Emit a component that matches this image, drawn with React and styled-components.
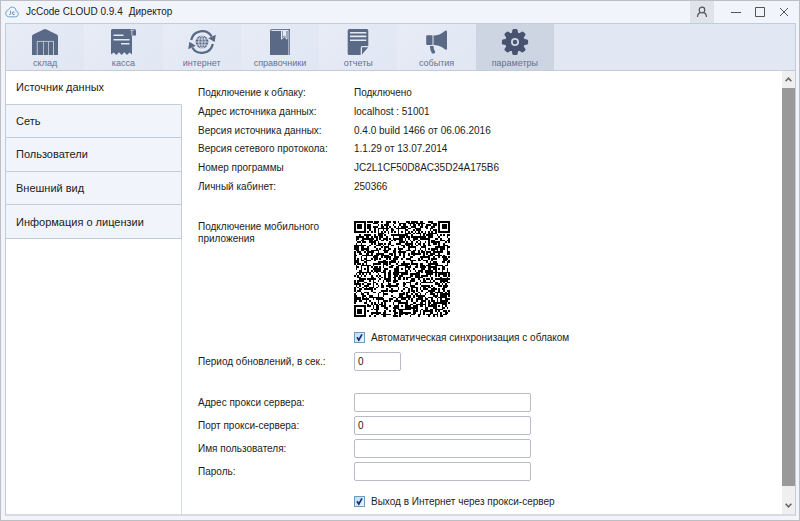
import React, { useState } from "react";
import styled, { createGlobalStyle } from "styled-components";

const GlobalStyle = createGlobalStyle`
  *, *::before, *::after { box-sizing: border-box; }
  body { margin: 0; }
  body, button, input { font-family: "Liberation Sans", Arial, sans-serif; }
`;

const slate = "#5a6986";
const line = "#c3cdd9";

const Window = styled.div`
  height: 100vh;
  display: flex;
  flex-direction: column;
  padding: 0 3px 4px 4px;
  border: 1px solid #bcbec2;
  background: #f1f4fa;
  color: #1c1c1c;
`;

const TitleBar = styled.header`
  flex: none;
  display: flex;
  align-items: center;
  height: 22px;
`;

const Title = styled.h1`
  display: flex;
  gap: 6px;
  margin: 0 auto 0 7px;
  font-size: 10px;
  font-weight: 400;
  line-height: 14px;
  color: #222;
`;

const WindowButton = styled.button`
  display: grid;
  place-items: center;
  width: 24px;
  height: 22px;
  padding: 0;
  border: 0;
  background: ${(p) => (p.$filled ? "#dfe3ea" : "transparent")};
  margin-right: ${(p) => (p.$filled ? "10px" : "0")};
  color: #555;
`;

const Frame = styled.div`
  flex: 1;
  min-height: 0;
  display: flex;
  flex-direction: column;
  border: 1px solid ${line};
  border-bottom-width: 2px;
  border-bottom-color: #d5dbe6;
  background: #fff;
`;

const Toolbar = styled.nav`
  flex: none;
  height: 47px;
  border-bottom: 1px solid ${line};
  background: #e1e8f4;
`;

const TabList = styled.div`
  display: grid;
  grid-template-columns: repeat(7, 1fr);
  max-width: 548px;
  height: 100%;
`;

const Tab = styled.button`
  display: flex;
  flex-direction: column;
  align-items: center;
  gap: 2px;
  padding: 4px 0 0;
  border: 0;
  background: ${(p) =>
    p.$active ? "#cdd4e2" : "linear-gradient(135deg, #e7ecf6, #e0e7f3)"};
  color: ${(p) => (p.$active ? "#475370" : slate)};
  font-size: 9px;
  line-height: 11px;
`;

const TabLabel = styled.span`
  color: #66738d;
`;

const Body = styled.div`
  flex: 1;
  min-height: 0;
  display: flex;
`;

const Sidebar = styled.nav`
  flex: none;
  width: 176px;
  border-right: 1px solid #d5dde5;
`;

const SideList = styled.div`
  display: grid;
  grid-template-rows: repeat(5, 1fr);
  height: 168px;
  margin-right: -1px;
`;

const SideItem = styled.button`
  padding: 0 10px;
  border: 0;
  border-bottom: 1px solid ${line};
  border-right: 1px solid ${(p) => (p.$active ? "#fff" : line)};
  background: ${(p) => (p.$active ? "#fff" : "#f1f4fa")};
  color: #222;
  font-size: 11px;
  line-height: 16px;
  text-align: left;
`;

const Content = styled.main`
  flex: 1;
  min-width: 0;
  padding: 13px 16px 0;
  overflow: hidden;
  font-size: 10px;
  line-height: 12px;
`;

const Facts = styled.dl`
  display: grid;
  grid-template-columns: 156px 1fr;
  grid-auto-rows: 1fr;
  align-items: center;
  height: 112px;
  margin: 0 0 25px;
`;

const FactName = styled.dt``;
const FactValue = styled.dd`
  margin: 0;
`;

const Row = styled.div`
  display: grid;
  grid-template-columns: 156px 1fr;
  align-items: ${(p) => (p.$top ? "start" : "center")};
`;

const Label = styled.label`
  max-width: 130px;
`;

const Fields = styled.div`
  display: grid;
  gap: 4px;
  margin: 22px 0 14px;
`;

const TextBox = styled.input`
  width: ${(p) => (p.$short ? "47px" : "177px")};
  height: 19px;
  padding: 0 3px;
  border: 1px solid #b9bcc4;
  border-radius: 2px;
  background: #fff;
  color: #222;
  font-size: 10px;
`;

const CheckLine = styled.label`
  display: flex;
  align-items: center;
  gap: 6px;
  height: 13px;
  margin-left: 156px;
`;

const CheckCell = styled.span`
  display: grid;
  width: 11px;
  height: 11px;
  & > * {
    grid-area: 1 / 1;
  }
`;

const CheckInput = styled.input`
  appearance: none;
  width: 11px;
  height: 11px;
  margin: 0;
  border: 1px solid #6d9cc0;
  background: linear-gradient(135deg, #b8dcf2, #eef8fd);
  & + svg {
    visibility: hidden;
    pointer-events: none;
  }
  &:checked + svg {
    visibility: visible;
  }
`;

const SyncGroup = styled.div`
  display: grid;
  gap: 8px;
  margin-top: 14px;
`;

const Scrollbar = styled.div`
  flex: none;
  display: flex;
  flex-direction: column;
  width: 13px;
  background: #efefef;
`;

const ScrollButton = styled.button`
  display: grid;
  place-items: center;
  width: 13px;
  height: ${(p) => (p.$down ? "18px" : "17px")};
  padding: 0;
  border: 0;
  background: transparent;
  color: #666;
`;

const ScrollThumb = styled.div`
  flex: 1;
  margin-bottom: 10px;
  background: #999;
`;

const Icon = ({ children, width = 28, height = 28 }) => (
  <svg width={width} height={height} viewBox={`0 0 ${width} ${height}`} fill="currentColor" aria-hidden="true">
    {children}
  </svg>
);

const WarehouseIcon = () => (
  <Icon>
    <path d="M1 8.5Q1 7.2 2.2 6.6L12.5 1.4Q14 .7 15.5 1.4L25.8 6.6Q27 7.2 27 8.5V27H23V13H6V27H1Z" />
    <path d="M6.2 13.2H22.5V27H6.2Z" />
    <path d="M6.2 27V13.4H22.5V27M12.5 13.4V27M17.5 13.4V27" fill="none" stroke="#c7d0df" strokeWidth=".8" />
  </Icon>
);

const ReceiptIcon = () => (
  <Icon>
    <path d="M2 2.5Q2 1 3.5 1H25Q27 1 27 3V7.5H23V26.5L20.5 24.5 18 27 15.3 24.3 12.7 27 10 24.3 7.4 27 4.7 24.5 2 26.5Z" />
    <path d="M22.9 7.5V3.4Q22.7 2.3 21.7 2.2H25" fill="none" stroke="#e4eaf5" strokeWidth=".8" />
    <path d="M4.5 7.2H14.5M4.5 11.7H20.5M12 15.7H20.5" fill="none" stroke="#e4eaf5" strokeWidth="1.4" />
  </Icon>
);

const InternetIcon = () => (
  <Icon>
    <g fill="none" stroke="currentColor" strokeWidth="2.3">
      <path d="M3.2 12A11.2 11.2 0 0 1 23.7 8.5" />
      <path d="M24.8 16A11.2 11.2 0 0 1 4.3 19.5" />
    </g>
    <path d="M27.8 6.8 26.7 14 20.2 10.2ZM.2 21.2 1.4 13.8 7.8 17.8Z" />
    <circle cx="14" cy="14" r="6.4" />
    <g fill="none" stroke="#e4eaf5" strokeWidth=".8">
      <path d="M8 11H20M7.5 14H20.5M8 17H20M14 7.5V20.5" />
      <ellipse cx="14" cy="14" rx="3.2" ry="6.4" />
    </g>
  </Icon>
);

const BookIcon = () => (
  <Icon>
    <path d="M4 2.8Q4 1 5.8 1H24V27H4Z" />
    <path d="M5.3 2.4H22.5" stroke="#e4eaf5" strokeWidth="1.1" />
    <path d="M15.5 2.4V11.2L18.2 8.6 21 11.2V2.4" fill="none" stroke="#e4eaf5" strokeWidth="1" />
    <path d="M16.6 2.9H20V9L18.2 7.4 16.6 9Z" fill="#e4eaf5" />
    <path d="M22.8 2.5V27" stroke="#c1cadb" strokeWidth="1" />
  </Icon>
);

const ReportIcon = () => (
  <Icon>
    <path d="M3.7 2.5Q3.7 1 5.2 1H22.8Q24.3 1 24.3 2.5V18H18.5Q16.7 18 16.7 20V27H5.2Q3.7 27 3.7 25.5Z" />
    <path d="M18 19.2H24.2L18 26.6Z" />
    <path d="M6 4.7H22.3M6 8.4H22.3M6 12.2H22.3" stroke="#e4eaf5" strokeWidth="1.6" />
  </Icon>
);

const MegaphoneIcon = () => (
  <Icon>
    <path d="M4.3 7.3H9.5V17H4.3Q3.2 17 3.2 15.9V8.4Q3.2 7.3 4.3 7.3Z" />
    <path d="M10.5 7.5Q17 7.2 20.8 3.7Q24 1.2 24 4V20.5Q24 23 20.8 20.5Q17 17.3 10.5 17Z" />
    <path d="M6.8 18H10.5Q10.3 21 12.2 23.8Q12.4 25.5 10.8 25.5H9Q7.1 22.5 6.8 18Z" />
  </Icon>
);

const GearIcon = () => (
  <Icon>
    <circle cx="14" cy="14" r="9.8" />
    {[0, 45, 90, 135, 180, 225, 270, 315].map((a) => (
      <path key={a} transform={`rotate(${a} 14 14)`} d="M10.6 6.5 11.4 2Q11.7 .9 12.8.9H15.2Q16.3.9 16.6 2L17.4 6.5Z" />
    ))}
    <circle cx="14" cy="14" r="4" fill="#cdd4e2" />
    <circle cx="14" cy="14" r="2.2" />
  </Icon>
);

const CloudLogo = () => (
  <svg width="14" height="12" viewBox="0 0 14 12" fill="none" stroke="#6fa6cc" aria-hidden="true">
    <path d="M3.4 10.8H10.8Q13.4 10.5 13.3 7.9 13.2 5.8 11.2 5.1 11.1 1.2 7.4 1 4.6.9 3.6 3.7 1 4 .7 7.2.6 10.3 3.4 10.8Z" />
    <path d="M5.6 4.8V7.8Q5.4 8.8 4.2 8.4M9.6 6.1Q7.4 5.3 7.4 7.2T9.6 8.4" stroke="#5585ad" strokeWidth=".9" />
  </svg>
);

/* Code symbol of 57 x 57 modules: finder, timing and alignment marks, then data. */
const N = 57;

function moduleAt(x, y, noise) {
  for (const [fx, fy] of [[3, 3], [N - 4, 3], [3, N - 4]]) {
    const d = Math.max(Math.abs(x - fx), Math.abs(y - fy));
    if (d <= 4) return d !== 4 && d !== 2;
  }
  for (const ay of [6, 28, 50]) {
    for (const ax of [6, 28, 50]) {
      const nearFinder = (ax === 6 && ay !== 28) || (ay === 6 && ax === 50);
      const d = Math.max(Math.abs(x - ax), Math.abs(y - ay));
      if (!nearFinder && d <= 2) return d !== 1;
    }
  }
  if (x === 6) return y % 2 === 0;
  if (y === 6) return x % 2 === 0;
  return noise > 0.48;
}

function buildCode() {
  let seed = 250366;
  let d = "";
  for (let y = 0; y < N; y++) {
    for (let x = 0; x < N; x++) {
      seed ^= seed << 13;
      seed ^= seed >>> 17;
      seed ^= seed << 5;
      if (moduleAt(x, y, (seed >>> 0) / 4294967296)) d += `M${x} ${y}h1v1h-1z`;
    }
  }
  return d;
}

const codePath = buildCode();

const QrCode = () => (
  <svg width="96" height="96" viewBox={`0 0 ${N} ${N}`} shapeRendering="crispEdges" role="img" aria-label="QR">
    <path d={codePath} fill="#000" />
  </svg>
);

const tabs = [
  ["склад", WarehouseIcon],
  ["касса", ReceiptIcon],
  ["интернет", InternetIcon],
  ["справочники", BookIcon],
  ["отчеты", ReportIcon],
  ["события", MegaphoneIcon],
  ["параметры", GearIcon],
];

const sections = ["Источник данных", "Сеть", "Пользователи", "Внешний вид", "Информация о лицензии"];

const facts = [
  ["Подключение к облаку:", "Подключено"],
  ["Адрес источника данных:", "localhost : 51001"],
  ["Версия источника данных:", "0.4.0 build 1466 от 06.06.2016"],
  ["Версия сетевого протокола:", "1.1.29 от 13.07.2014"],
  ["Номер программы", "JC2L1CF50D8AC35D24A175B6"],
  ["Личный кабинет:", "250366"],
];

const proxyFields = [
  ["host", "Адрес прокси сервера:", "", "text"],
  ["port", "Порт прокси-сервера:", "0", "text"],
  ["user", "Имя пользователя:", "", "text"],
  ["password", "Пароль:", "", "password"],
];

const Check = ({ children }) => (
  <CheckLine>
    <CheckCell>
      <CheckInput type="checkbox" defaultChecked />
      <svg width="11" height="11" viewBox="0 0 11 11" fill="none" stroke="#1d2f7c" strokeWidth="1.7" aria-hidden="true">
        <path d="M3 5.2 4.8 8 8 2.4" />
      </svg>
    </CheckCell>
    {children}
  </CheckLine>
);

export default function App() {
  const [tab, setTab] = useState("параметры");
  const [section, setSection] = useState(sections[0]);

  return (
    <Window>
      <GlobalStyle />
      <TitleBar>
        <CloudLogo />
        <Title>
          <span>JcCode CLOUD 0.9.4</span>
          <span>Директор</span>
        </Title>
        <WindowButton $filled aria-label="Профиль">
          <svg width="12" height="12" viewBox="0 0 12 12" fill="none" stroke="currentColor" strokeWidth="1.2">
            <circle cx="6" cy="4" r="2.8" />
            <path d="M1.5 11Q1.7 7.2 4.5 6.6M10.5 11Q10.3 7.2 7.5 6.6" />
          </svg>
        </WindowButton>
        <WindowButton aria-label="Свернуть">
          <svg width="10" height="10" viewBox="0 0 10 10" stroke="currentColor">
            <path d="M0 5.5H10" />
          </svg>
        </WindowButton>
        <WindowButton aria-label="Развернуть">
          <svg width="10" height="10" viewBox="0 0 10 10" fill="none" stroke="currentColor">
            <path d="M.5.5H9.5V9.5H.5Z" />
          </svg>
        </WindowButton>
        <WindowButton aria-label="Закрыть">
          <svg width="10" height="10" viewBox="0 0 10 10" stroke="currentColor">
            <path d="M1 1 9 9M9 1 1 9" />
          </svg>
        </WindowButton>
      </TitleBar>
      <Frame>
        <Toolbar>
          <TabList>
            {tabs.map(([name, TabIcon]) => (
              <Tab key={name} $active={tab === name} onClick={() => setTab(name)}>
                <TabIcon />
                <TabLabel>{name}</TabLabel>
              </Tab>
            ))}
          </TabList>
        </Toolbar>
        <Body>
          <Sidebar>
            <SideList>
              {sections.map((name) => (
                <SideItem key={name} $active={section === name} onClick={() => setSection(name)}>
                  {name}
                </SideItem>
              ))}
            </SideList>
          </Sidebar>
          <Content>
            <Facts>
              {facts.map(([name, value]) => (
                <React.Fragment key={name}>
                  <FactName>{name}</FactName>
                  <FactValue>{value}</FactValue>
                </React.Fragment>
              ))}
            </Facts>
            <Row $top>
              <Label as="div">Подключение мобильного приложения</Label>
              <QrCode />
            </Row>
            <SyncGroup>
              <Check>Автоматическая синхронизация с облаком</Check>
              <Row>
                <Label htmlFor="period">Период обновлений, в сек.:</Label>
                <TextBox id="period" $short defaultValue="0" />
              </Row>
            </SyncGroup>
            <Fields>
              {proxyFields.map(([id, name, value, type]) => (
                <Row key={id}>
                  <Label htmlFor={id}>{name}</Label>
                  <TextBox id={id} type={type} defaultValue={value} />
                </Row>
              ))}
            </Fields>
            <Check>Выход в Интернет через прокси-сервер</Check>
          </Content>
          <Scrollbar>
            <ScrollButton aria-label="Вверх">
              <svg width="7" height="5" viewBox="0 0 7 5" fill="none" stroke="currentColor" strokeWidth="1.6">
                <path d="M.6 4.2 3.5 1.2 6.4 4.2" />
              </svg>
            </ScrollButton>
            <ScrollThumb />
            <ScrollButton $down aria-label="Вниз">
              <svg width="7" height="5" viewBox="0 0 7 5" fill="none" stroke="currentColor" strokeWidth="1.6">
                <path d="M.6 .8 3.5 3.8 6.4 .8" />
              </svg>
            </ScrollButton>
          </Scrollbar>
        </Body>
      </Frame>
    </Window>
  );
}
